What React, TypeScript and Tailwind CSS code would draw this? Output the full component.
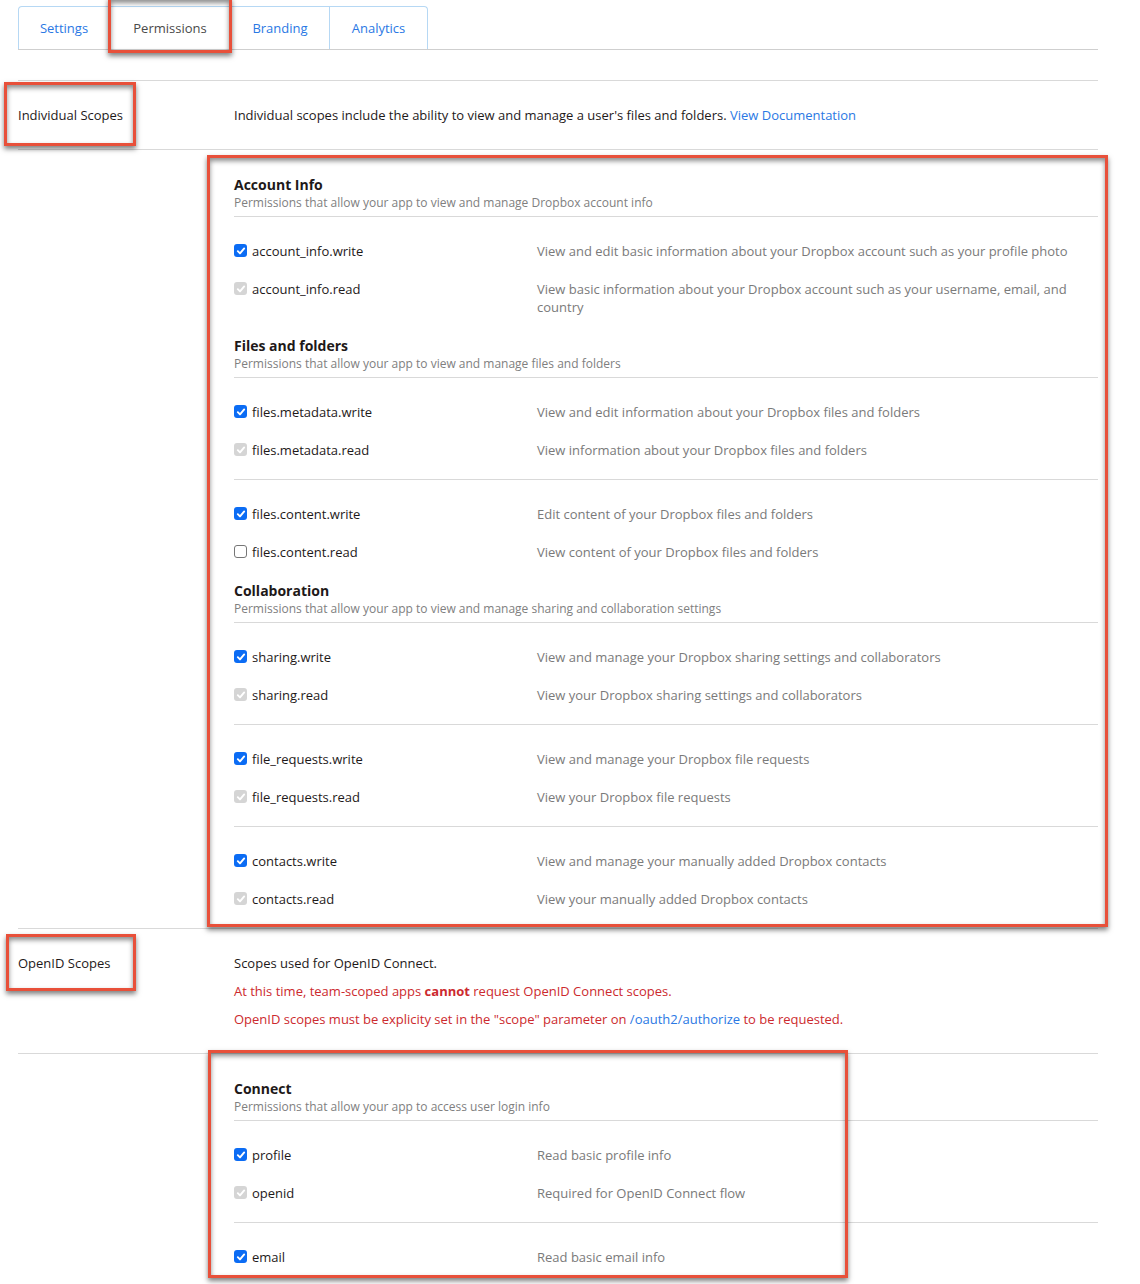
import React from "react";

type ScopeState = "on" | "locked" | "off";

type Scope = {
    name: string;
    desc: string;
    state: ScopeState;
};

type Group = {
    title: string;
    subtitle: string;
    blocks: Scope[][];
};

const groups: Group[] = [
    {
        title: "Account Info",
        subtitle: "Permissions that allow your app to view and manage Dropbox account info",
        blocks: [
            [
                { name: "account_info.write", desc: "View and edit basic information about your Dropbox account such as your profile photo", state: "on" },
                { name: "account_info.read", desc: "View basic information about your Dropbox account such as your username, email, and country", state: "locked" },
            ],
        ],
    },
    {
        title: "Files and folders",
        subtitle: "Permissions that allow your app to view and manage files and folders",
        blocks: [
            [
                { name: "files.metadata.write", desc: "View and edit information about your Dropbox files and folders", state: "on" },
                { name: "files.metadata.read", desc: "View information about your Dropbox files and folders", state: "locked" },
            ],
            [
                { name: "files.content.write", desc: "Edit content of your Dropbox files and folders", state: "on" },
                { name: "files.content.read", desc: "View content of your Dropbox files and folders", state: "off" },
            ],
        ],
    },
    {
        title: "Collaboration",
        subtitle: "Permissions that allow your app to view and manage sharing and collaboration settings",
        blocks: [
            [
                { name: "sharing.write", desc: "View and manage your Dropbox sharing settings and collaborators", state: "on" },
                { name: "sharing.read", desc: "View your Dropbox sharing settings and collaborators", state: "locked" },
            ],
            [
                { name: "file_requests.write", desc: "View and manage your Dropbox file requests", state: "on" },
                { name: "file_requests.read", desc: "View your Dropbox file requests", state: "locked" },
            ],
            [
                { name: "contacts.write", desc: "View and manage your manually added Dropbox contacts", state: "on" },
                { name: "contacts.read", desc: "View your manually added Dropbox contacts", state: "locked" },
            ],
        ],
    },
];

const connectGroup: Group = {
    title: "Connect",
    subtitle: "Permissions that allow your app to access user login info",
    blocks: [
        [
            { name: "profile", desc: "Read basic profile info", state: "on" },
            { name: "openid", desc: "Required for OpenID Connect flow", state: "locked" },
        ],
        [{ name: "email", desc: "Read basic email info", state: "on" }],
    ],
};

const tabs = [
    { label: "Settings", width: "w-[92px] rounded-tl-[4px] border-l" },
    { label: "Permissions", width: "w-[121px]" },
    { label: "Branding", width: "w-[99px]" },
    { label: "Analytics", width: "w-[98px] rounded-tr-[4px]" },
];

function Checkbox({ state }: { state: ScopeState }) {
    if (state === "off") {
        return <span className="mt-[2px] h-[13px] w-[13px] shrink-0 rounded-[3px] border border-[#767676] bg-white" />;
    }
    return (
        <span
            className={`mt-[2px] flex h-[13px] w-[13px] shrink-0 items-center justify-center rounded-[3px] ${
                state === "on" ? "bg-[#0b6cf4]" : "bg-[#d5d5d5]"
            }`}
        >
            <svg width="10" height="10" viewBox="0 0 10 10" fill="none">
                <path d="M1.8 5.2 L4 7.4 L8.2 2.4" stroke="white" strokeWidth="1.9" strokeLinecap="round" strokeLinejoin="round" />
            </svg>
        </span>
    );
}

function ScopeGroup({ group }: { group: Group }) {
    return (
        <div>
            <div className="border-b border-[#d9d9d9] pb-[5px]">
                <div className="text-[14px] font-bold leading-[20px] text-[#1e1919]">{group.title}</div>
                <div className="text-[12px] leading-[16px] text-[#808080]">{group.subtitle}</div>
            </div>
            {group.blocks.map((block, i) => (
                <div key={i} className={`pt-[15px] pb-[10px] ${i > 0 ? "border-t border-[#d9d9d9]" : ""}`}>
                    {block.map((scope) => (
                        <div key={scope.name} className="flex py-[10px] text-[13px] leading-[18px]">
                            <div className="flex w-[303px] shrink-0 items-start gap-[5px] text-[#1e1919]">
                                <Checkbox state={scope.state} />
                                <span>{scope.name}</span>
                            </div>
                            <div className="flex-1 pr-[20px] text-[#7a7a7a]">{scope.desc}</div>
                        </div>
                    ))}
                </div>
            ))}
        </div>
    );
}

// red annotation frames drawn over the screenshot
function Marker({ className }: { className: string }) {
    return (
        <div
            className={`pointer-events-none absolute border-[3px] border-[#e8503a] shadow-[0_3px_5px_rgba(0,0,0,0.5),inset_0_3px_5px_rgba(0,0,0,0.45)] ${className}`}
        />
    );
}

export default function App() {
    return (
        <div className="relative min-h-[1284px] overflow-hidden bg-white font-['Open_Sans',sans-serif] text-[13px] text-[#1e1919]">
            <div className="ml-[18px] w-[1080px]">
                {/* Tabs */}
                <div className="border-b border-[#cfcfcf] pt-[6px]">
                    <div className="flex">
                        {tabs.map((tab) => (
                            <div
                                key={tab.label}
                                className={`flex h-[43px] items-center justify-center border-t border-r border-[#b6d8f4] pt-[1px] ${tab.width} ${
                                    tab.label === "Permissions" ? "text-[#4a4a4a]" : "text-[#2a78e4]"
                                }`}
                            >
                                {tab.label}
                            </div>
                        ))}
                    </div>
                </div>

                {/* Individual scopes */}
                <div className="mt-[30px] border-t border-[#d9d9d9]">
                    <div className="flex border-b border-[#d9d9d9] py-[25px] leading-[18px]">
                        <div className="w-[216px] shrink-0">Individual Scopes</div>
                        <div>
                            Individual scopes include the ability to view and manage a user's files and folders.{" "}
                            <span className="text-[#2a78e4]">View Documentation</span>
                        </div>
                    </div>
                    <div className="border-b border-[#d9d9d9] pl-[216px] pt-[25px]">
                        {groups.map((g) => (
                            <ScopeGroup key={g.title} group={g} />
                        ))}
                    </div>

                    {/* OpenID scopes */}
                    <div className="flex border-b border-[#d9d9d9] py-[25px] leading-[18px]">
                        <div className="w-[216px] shrink-0">OpenID Scopes</div>
                        <div className="flex flex-col gap-[10px]">
                            <div>Scopes used for OpenID Connect.</div>
                            <div className="text-[#cc2a2e]">
                                At this time, team-scoped apps <span className="font-bold">cannot</span> request OpenID Connect scopes.
                            </div>
                            <div className="text-[#cc2a2e]">
                                OpenID scopes must be explicity set in the "scope" parameter on{" "}
                                <span className="text-[#2a78e4]">/oauth2/authorize</span> to be requested.
                            </div>
                        </div>
                    </div>
                    <div className="pl-[216px] pt-[25px]">
                        <ScopeGroup group={connectGroup} />
                    </div>
                </div>
            </div>

            <Marker className="left-[108px] top-[-3px] h-[56px] w-[124px]" />
            <Marker className="left-[4px] top-[82px] h-[64px] w-[132px]" />
            <Marker className="left-[207px] top-[155px] h-[772px] w-[901px]" />
            <Marker className="left-[6px] top-[934px] h-[57px] w-[130px]" />
            <Marker className="left-[208px] top-[1050px] h-[228px] w-[640px]" />
        </div>
    );
}
